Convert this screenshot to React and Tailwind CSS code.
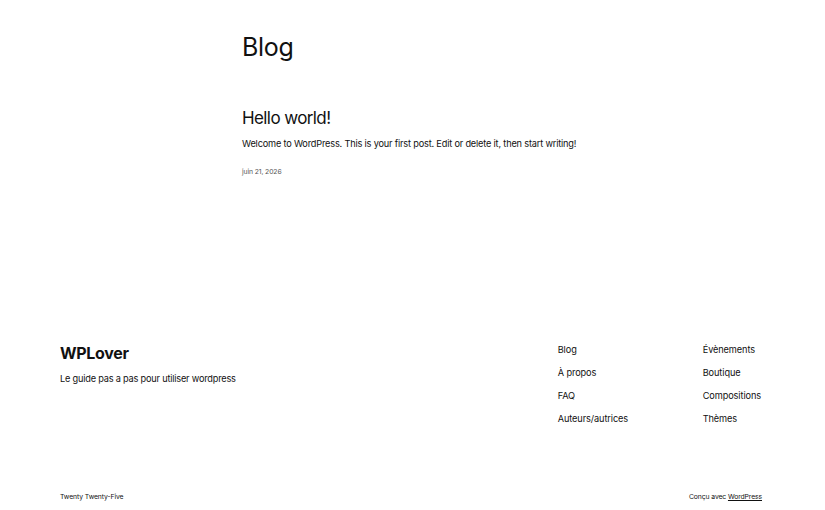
export default function App() {
  const font = { fontFamily: 'Inter, "Noto Sans", sans-serif' };
  return (
    <div className="w-[825px] h-[510px] bg-white text-[#111111] flex flex-col" style={font}>
      <main className="w-[341px] mx-auto pt-[30px]">
        <h1 className="text-[25px] leading-[34px] font-normal tracking-[-0.3px]">Blog</h1>
        <h2 className="mt-[42px] text-[17px] leading-[24px] font-normal tracking-[-0.6px]">Hello world!</h2>
        <p className="mt-[6px] text-[9.2px] leading-[16px] whitespace-nowrap tracking-[-0.18px]">Welcome to WordPress. This is your first post. Edit or delete it, then start writing!</p>
        <p className="mt-[15px] text-[6.8px] leading-[10px] text-[#555] tracking-[-0.1px]">juin 21, 2026</p>
      </main>
      <footer className="mt-auto pl-[60px] pr-[63px]">
        <div className="flex justify-between">
          <div className="-mt-[4px]">
            <div className="text-[16px] leading-[24px] font-bold tracking-[-0.3px]">WPLover</div>
            <div className="mt-[7px] text-[9.2px] leading-[14px] tracking-[-0.2px]">Le guide pas a pas pour utiliser wordpress</div>
          </div>
          <div className="flex text-[9.2px] leading-[14px] tracking-[-0.1px] -mt-[2px] mr-[1px]">
            <ul className="w-[145px] flex flex-col gap-[9px]">
              <li>Blog</li>
              <li>À propos</li>
              <li>FAQ</li>
              <li>Auteurs/autrices</li>
            </ul>
            <ul className="flex flex-col gap-[9px]">
              <li>Évènements</li>
              <li>Boutique</li>
              <li>Compositions</li>
              <li>Thèmes</li>
            </ul>
          </div>
        </div>
        <div className="mt-[66px] pb-[8px] flex justify-between text-[6.8px] leading-[10px] tracking-[-0.1px]">
          <span>Twenty Twenty-Five</span>
          <span>Conçu avec <span className="underline">WordPress</span></span>
        </div>
      </footer>
    </div>
  );
}
